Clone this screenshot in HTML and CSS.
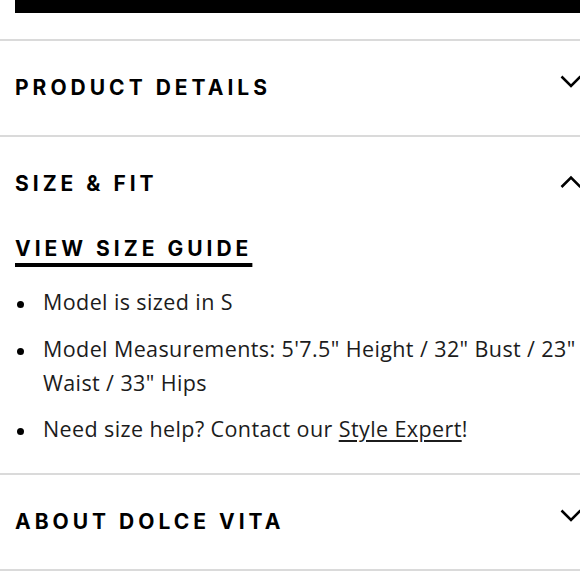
FILE: index.html
```html
<!DOCTYPE html>
<html>
<head>
<meta charset="utf-8">
<link rel="stylesheet" href="styles.css">
</head>
<body>
<div class="page">
  <div class="topbar"></div>
  <section class="acc">
    <div class="acc-head">
      <h2 class="acc-title">PRODUCT DETAILS</h2>
      <svg class="chev" width="24" height="24" viewBox="0 0 24 24"><path d="M2.5 4.5 L12 14 L21.5 4.5" fill="none" stroke="#000" stroke-width="2.5"/></svg>
    </div>
  </section>
  <section class="acc">
    <div class="acc-head">
      <h2 class="acc-title">SIZE &amp; FIT</h2>
      <svg class="chev" width="24" height="24" viewBox="0 0 24 24"><path d="M2.5 19 L12 9.5 L21.5 19" fill="none" stroke="#000" stroke-width="2.5"/></svg>
    </div>
    <div class="acc-body">
      <a class="guide" href="#">VIEW SIZE GUIDE</a>
      <ul class="list">
        <li><span>Model is sized in S</span></li>
        <li><span>Model Measurements: 5'7.5" Height / 32" Bust / 23" Waist / 33" Hips</span></li>
        <li><span>Need size help? Contact our <a class="link" href="#">Style Expert</a>!</span></li>
      </ul>
    </div>
  </section>
  <section class="acc">
    <div class="acc-head">
      <h2 class="acc-title">ABOUT DOLCE VITA</h2>
      <svg class="chev" width="24" height="24" viewBox="0 0 24 24"><path d="M2.5 4.5 L12 14 L21.5 4.5" fill="none" stroke="#000" stroke-width="2.5"/></svg>
    </div>
  </section>
</div>
</body>
</html>
```
FILE: styles.css
```css
html, body {
  margin: 0;
  padding: 0;
  background: #fff;
}
.page {
  width: 580px;
  height: 580px;
  overflow: hidden;
  font-family: "Open Sans", "Noto Sans", sans-serif;
  color: #1c1c1c;
}
.topbar {
  height: 13px;
  margin-left: 15px;
  background: #000;
  margin-bottom: 26px;
}
.acc {
  border-top: 2px solid #dadada;
}
.acc:last-child {
  border-bottom: 2px solid #dadada;
}
.acc-head {
  height: 94px;
  display: flex;
  align-items: center;
  justify-content: space-between;
  padding-left: 15px;
}
.acc-title {
  margin: 0;
  font-family: Inter, "Liberation Sans", sans-serif;
  font-weight: 700;
  font-size: 21px;
  line-height: 24px;
  letter-spacing: 4px;
  color: #000;
}
.chev {
  flex: none;
  margin-right: -3px;
  margin-bottom: 8px;
}
.acc-body {
  padding: 6px 0 27px 15px;
}
.guide {
  display: inline-block;
  font-family: Inter, "Liberation Sans", sans-serif;
  font-weight: 700;
  font-size: 21px;
  line-height: 24px;
  letter-spacing: 4px;
  color: #000;
  text-decoration: underline;
  text-decoration-thickness: 3.5px;
  text-underline-offset: 7px;
}
.list {
  list-style: none;
  margin: 24px 0 0;
  padding: 0;
  font-size: 21.5px;
  letter-spacing: 0.4px;
  line-height: 34px;
}
.list li {
  display: grid;
  grid-template-columns: 28px 1fr;
  margin-bottom: 12.5px;
}
.list li:last-child {
  margin-bottom: 0;
}
.list li::before {
  content: "";
  width: 7px;
  height: 7px;
  margin: 16px 0 0 1.5px;
  border-radius: 50%;
  background: #000;
}
.link {
  color: inherit;
  text-decoration: underline;
  text-decoration-thickness: 1.5px;
  text-underline-offset: 3px;
}
```
